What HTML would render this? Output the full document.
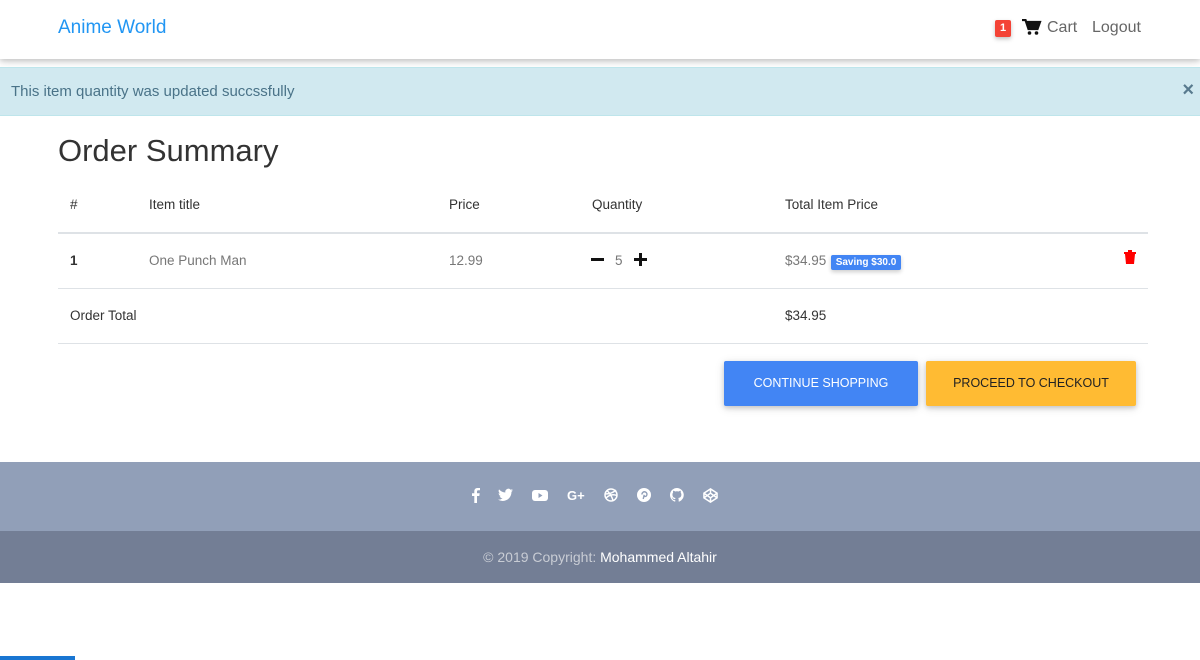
<!DOCTYPE html>
<html><head><meta charset="utf-8"><style>
*{box-sizing:border-box;margin:0;padding:0}
body{width:1200px;height:660px;overflow:hidden;background:#fff;font-family:"Liberation Sans",sans-serif;color:#212529;position:relative}
.nav{position:absolute;top:0;left:0;width:1200px;height:59px;background:#fff;box-shadow:0 2px 5px rgba(0,0,0,.16),0 2px 10px rgba(0,0,0,.12)}
.brand{position:absolute;left:58px;top:17px;font-size:19px;color:#2196f3}
.badge{position:absolute;left:995px;top:20px;width:16px;height:17px;background:#f44336;color:#fff;font-size:11px;font-weight:bold;text-align:center;line-height:17px;border-radius:2px;box-shadow:0 2px 4px rgba(0,0,0,.25)}
.cart{position:absolute;left:1047px;top:19px;font-size:16px;color:#666}
.logout{position:absolute;left:1092px;top:19px;font-size:16px;color:#666}
.alert{position:absolute;top:67px;left:0;width:1200px;height:49px;background:#d1e9f0;border-top:1px solid #bee5eb;border-bottom:1px solid #bee5eb}
.alert span{position:absolute;left:11px;top:15px;font-size:15px;color:#4a7388}
.alert b{position:absolute;right:6px;top:11px;font-size:20px;color:#587a8e}
h2{position:absolute;left:58px;top:133px;font-size:31px;font-weight:normal;color:#333}
.t{position:absolute;font-size:13.5px;color:#333}
.line{position:absolute;left:58px;width:1090px;background:#dee2e6;height:1px}
.g{color:#777}
.btn{position:absolute;top:361px;height:45px;font-size:12.5px;text-align:center;line-height:45px;border-radius:2px;box-shadow:0 2px 5px rgba(0,0,0,.16),0 2px 10px rgba(0,0,0,.12)}
.f1{position:absolute;top:462px;left:0;width:1200px;height:70px;background:#919fb8}
.f2{position:absolute;top:531px;left:0;width:1200px;height:52px;background:#737e95;text-align:center;line-height:52px;font-size:14px;color:#c8ccd4}
.ic{position:absolute;top:488px}
</style></head><body>
<div class="nav">
<div class="brand">Anime World</div>
<div class="badge">1</div>
<svg style="position:absolute;left:1022px;top:19px" width="20" height="16" viewBox="0 0 20 16"><path d="M0 1h3.5l3 9h9l2.5-7H5" fill="none" stroke="#111" stroke-width="2.2"/><path d="M5 3h13l-2.5 7h-9z" fill="#111"/><circle cx="7.5" cy="14" r="1.8" fill="#111"/><circle cx="14.5" cy="14" r="1.8" fill="#111"/></svg>
<div class="cart">Cart</div>
<div class="logout">Logout</div>
</div>
<div class="alert"><span>This item quantity was updated succssfully</span><b>×</b></div>
<h2>Order Summary</h2>
<div class="t" style="left:70px;top:197px">#</div>
<div class="t" style="left:149px;top:197px">Item title</div>
<div class="t" style="left:449px;top:197px">Price</div>
<div class="t" style="left:592px;top:197px">Quantity</div>
<div class="t" style="left:785px;top:197px">Total Item Price</div>
<div class="line" style="top:232px;height:2px"></div>
<div class="t" style="left:70px;top:253px;font-weight:bold">1</div>
<div class="t g" style="left:149px;top:253px">One Punch Man</div>
<div class="t g" style="left:449px;top:253px">12.99</div>
<div style="position:absolute;left:591px;top:258px;width:13px;height:3px;background:#111"></div>
<div class="t g" style="left:615px;top:253px">5</div>
<div style="position:absolute;left:634px;top:258px;width:13px;height:3px;background:#111"></div>
<div style="position:absolute;left:639px;top:253px;width:3px;height:13px;background:#111"></div>
<div class="t g" style="left:785px;top:253px">$34.95</div>
<div style="position:absolute;left:831px;top:255px;width:70px;height:15px;background:#4285f4;color:#fff;font-size:10px;font-weight:bold;text-align:center;line-height:15px;border-radius:2px;box-shadow:0 2px 4px rgba(0,0,0,.2)">Saving $30.0</div>
<svg style="position:absolute;left:1124px;top:250px" width="12" height="14" viewBox="0 0 12 14"><path d="M0 2h12v2H0zM4 0h4v2H4zM1 4h10l-1 10H2z" fill="#f00"/></svg>
<div class="line" style="top:288px"></div>
<div class="t" style="left:70px;top:308px">Order Total</div>
<div class="t" style="left:785px;top:308px">$34.95</div>
<div class="line" style="top:343px"></div>
<div class="btn" style="left:724px;width:194px;background:#4285f4;color:#fff">CONTINUE SHOPPING</div>
<div class="btn" style="left:926px;width:210px;background:#ffbb33;color:#222">PROCEED TO CHECKOUT</div>
<div class="f1"></div>
<div class="f2">© 2019 Copyright: <span style="color:#fff">Mohammed Altahir</span></div>
<svg class="ic" style="left:472px" width="8" height="15" viewBox="0 0 8 15"><path d="M5 15V8h2.3l.4-2.7H5V3.6c0-.8.3-1.3 1.4-1.3H8V0H5.7C3.5 0 2.3 1.2 2.3 3.4v1.9H0V8h2.3v7z" fill="#fff"/></svg>
<svg class="ic" style="left:498px" width="15" height="14" viewBox="0 0 24 20"><path d="M24 2.4a10 10 0 0 1-2.8.8A5 5 0 0 0 23.3.4a10 10 0 0 1-3.1 1.2A4.9 4.9 0 0 0 11.8 6 14 14 0 0 1 1.7.9a4.9 4.9 0 0 0 1.5 6.6A4.9 4.9 0 0 1 1 6.9a4.9 4.9 0 0 0 3.9 4.8 5 5 0 0 1-2.2.1 4.9 4.9 0 0 0 4.6 3.4A9.9 9.9 0 0 1 0 17.3 14 14 0 0 0 7.5 19.5c9 0 14-7.5 14-14v-.6A10 10 0 0 0 24 2.4z" fill="#fff"/></svg>
<svg class="ic" style="left:532px;top:490px" width="16" height="11" viewBox="0 0 16 11"><rect width="16" height="11" rx="3" fill="#fff"/><path d="M6.5 3v5l4-2.5z" fill="#919fb8"/></svg>
<div style="position:absolute;left:567px;top:488px;color:#fff;font-weight:bold;font-size:13px">G+</div>
<svg class="ic" style="left:604px" width="14" height="14" viewBox="0 0 14 14" fill="none" stroke="#fff" stroke-width="1.5"><circle cx="7" cy="7" r="6"/><path d="M3 2.5c3 3 5 6 6 10M1 6c4 0 8-1 11-4M2 10c3-3 7-4 11-2.5"/></svg>
<svg class="ic" style="left:637px" width="14" height="14" viewBox="0 0 14 14"><circle cx="7" cy="7" r="7" fill="#fff"/><path d="M6.2 11l1-4.2M5 6.5a2.5 2.5 0 1 1 4.3 1.5c-.7.7-2 .6-2-.4" fill="none" stroke="#919fb8" stroke-width="1.4"/></svg>
<svg class="ic" style="left:670px" width="14" height="14" viewBox="0 0 16 16"><path d="M8 0a8 8 0 0 0-2.5 15.6c.4 0 .5-.2.5-.4v-1.5c-2.2.5-2.7-1-2.7-1-.4-.9-.9-1.2-.9-1.2-.7-.5 0-.5 0-.5.8.1 1.200.8 1.200.8.7 1.3 1.9.9 2.3.7.1-.5.3-.9.5-1.1-1.8-.2-3.6-.9-3.6-4 0-.9.3-1.6.8-2.1-.1-.2-.4-1 .1-2.1 0 0 .7-.2 2.200.8a7.5 7.5 0 0 1 4 0c1.5-1 2.2-.8 2.2-.8.4 1.1.2 1.9.1 2.1.5.6.8 1.3.8 2.1 0 3.1-1.9 3.8-3.6 4 .3.3.5.8.5 1.5v2.2c0 .2.1.5.6.4A8 8 0 0 0 8 0z" fill="#fff"/></svg>
<svg class="ic" style="left:703px" width="15" height="15" viewBox="0 0 16 16" fill="none" stroke="#fff" stroke-width="1.6"><path d="M8 1l7 4.5v5L8 15 1 10.5v-5z M8 1v4.5M8 10.5V15M1 5.5l7 5 7-5M1 10.5l7-5 7 5"/></svg>
<div style="position:absolute;left:0;top:656px;width:75px;height:4px;background:#1976d2"></div>
</body></html>
